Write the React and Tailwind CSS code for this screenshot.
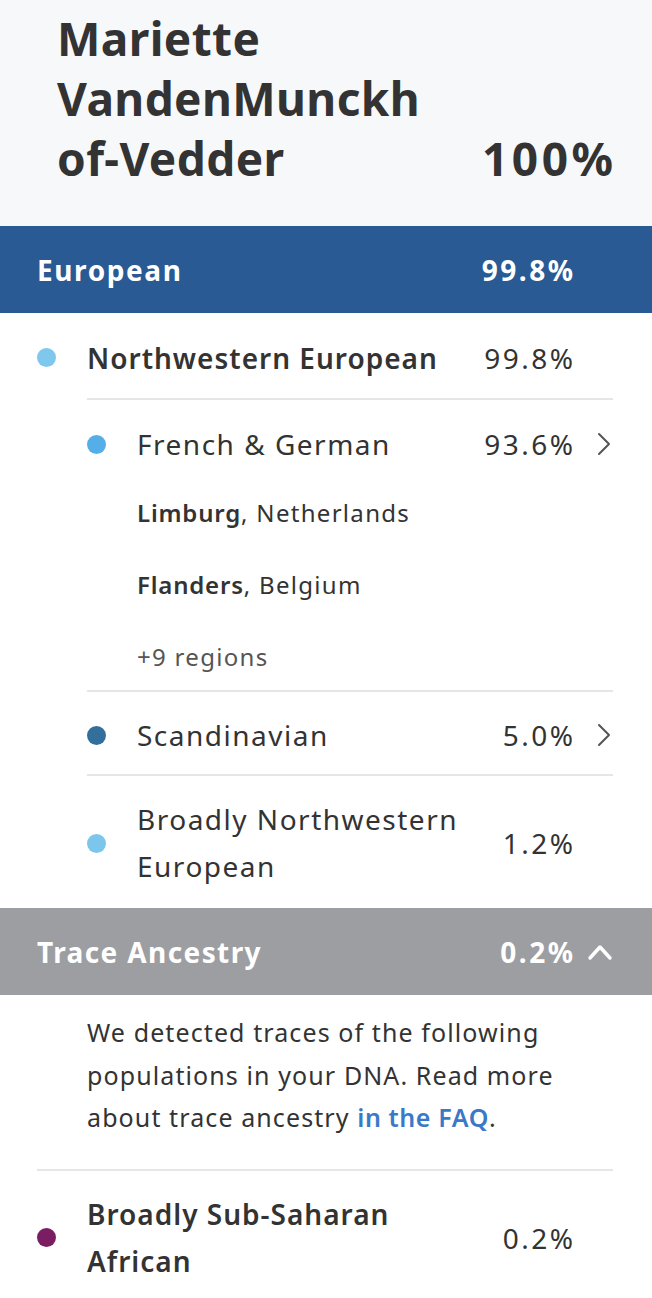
const font = { fontFamily: '"Noto Sans", Lato, sans-serif' }

function Dot({ color }) {
  return <span className={`block w-[19px] h-[19px] rounded-full shrink-0 ${color}`} />
}

function Chevron() {
  return (
    <svg width="14" height="24" viewBox="0 0 14 24" fill="none" stroke="#555" strokeWidth="2" strokeLinecap="round" strokeLinejoin="round">
      <polyline points="2,2 12,12 2,22" />
    </svg>
  )
}

function Pct({ children, className = '' }) {
  return <span className={`text-[28px] tracking-[2.5px] mr-[-2.5px] ${className}`}>{children}</span>
}

export default function App() {
  return (
    <div className="w-full bg-white text-[#333]" style={font}>
      {/* name header */}
      <div className="bg-[#f7f8fa] pl-[57px] pr-[39px] pt-[8px] pb-[38px] flex items-end justify-between">
        <h1 className="text-[46px] font-bold leading-[60px] tracking-[0.4px]">
          <span className="block">Mariette</span>
          <span className="block">VandenMunckh</span>
          <span className="block">of-Vedder</span>
        </h1>
        <span className="text-[46px] font-bold leading-[60px] tracking-[3.5px] mr-[-3.5px]">100%</span>
      </div>

      {/* European band */}
      <div className="h-[87px] bg-[#2a5a94] text-white flex items-center justify-between pl-[37px] pr-[79px]">
        <span className="text-[28px] font-bold tracking-[1.6px]">European</span>
        <Pct className="font-bold">99.8%</Pct>
      </div>

      {/* Northwestern European */}
      <div className="h-[85px] flex items-center pl-[37px] pr-[79px] pt-[4px]">
        <Dot color="bg-[#7dc8ec]" />
        <span className="ml-[31px] flex-1 text-[28px] font-semibold tracking-[1px]">Northwestern European</span>
        <Pct>99.8%</Pct>
      </div>

      <div className="ml-[87px] mr-[39px]">
        {/* French & German */}
        <div className="border-t-2 border-[#e6e6e6] pb-[13px]">
          <div className="flex items-center pt-[24px] pb-[26px] leading-[40px]">
            <span className="w-[50px] shrink-0"><Dot color="bg-[#55aee8]" /></span>
            <span className="flex-1 text-[28px] tracking-[1.5px]">French &amp; German</span>
            <Pct>93.6%</Pct>
            <span className="w-[40px] flex justify-end pr-[2px]"><Chevron /></span>
          </div>
          <div className="pl-[50px] flex flex-col gap-[32px] mt-[3px] text-[24px] leading-[40px] tracking-[1.3px]">
            <p><span className="font-semibold tracking-[0.8px]">Limburg</span>, Netherlands</p>
            <p><span className="font-semibold tracking-[0.8px]">Flanders</span>, Belgium</p>
            <p className="text-[#555]">+9 regions</p>
          </div>
        </div>

        {/* Scandinavian */}
        <div className="border-t-2 border-[#e6e6e6] h-[84px] flex items-center pt-[4px]">
          <span className="w-[50px] shrink-0"><Dot color="bg-[#336f9b]" /></span>
          <span className="flex-1 text-[28px] tracking-[1.5px]">Scandinavian</span>
          <Pct>5.0%</Pct>
          <span className="w-[40px] flex justify-end pr-[2px]"><Chevron /></span>
        </div>

        {/* Broadly Northwestern European */}
        <div className="border-t-2 border-[#e6e6e6] pt-[20px] pb-[18px] flex items-center">
          <span className="w-[50px] shrink-0"><Dot color="bg-[#7cc6ec]" /></span>
          <span className="flex-1 text-[28px] leading-[47px] tracking-[1.5px]">Broadly Northwestern<br />European</span>
          <Pct>1.2%</Pct>
          <span className="w-[40px]" />
        </div>
      </div>

      {/* Trace Ancestry band */}
      <div className="h-[87px] bg-[#9d9ea2] text-white flex items-center pl-[37px] pr-[39px]">
        <span className="flex-1 text-[28px] font-bold tracking-[1.4px]">Trace Ancestry</span>
        <Pct className="font-bold">0.2%</Pct>
        <span className="w-[40px] flex justify-end">
          <svg width="26" height="18" viewBox="0 0 26 18" fill="none" stroke="white" strokeWidth="3.5" strokeLinecap="round" strokeLinejoin="round">
            <polyline points="3,15 13,4 23,15" />
          </svg>
        </span>
      </div>

      <div className="ml-[37px] mr-[39px]">
        <p className="pl-[50px] pt-[16px] pb-[30px] text-[25px] leading-[42.5px] tracking-[1.1px]">
          We detected traces of the following<br />
          populations in your DNA. Read more<br />
          about trace ancestry <a className="text-[#3a78c8] font-semibold tracking-[0.6px]">in the FAQ</a>.
        </p>

        {/* Broadly Sub-Saharan African */}
        <div className="border-t-2 border-[#e6e6e6] pt-[20px] pb-[20px] flex items-center pr-[40px]">
          <Dot color="bg-[#7a1d62]" />
          <span className="ml-[31px] flex-1 text-[28px] font-semibold leading-[47px] tracking-[1px]">Broadly Sub-Saharan<br />African</span>
          <Pct>0.2%</Pct>
        </div>
      </div>
    </div>
  )
}
